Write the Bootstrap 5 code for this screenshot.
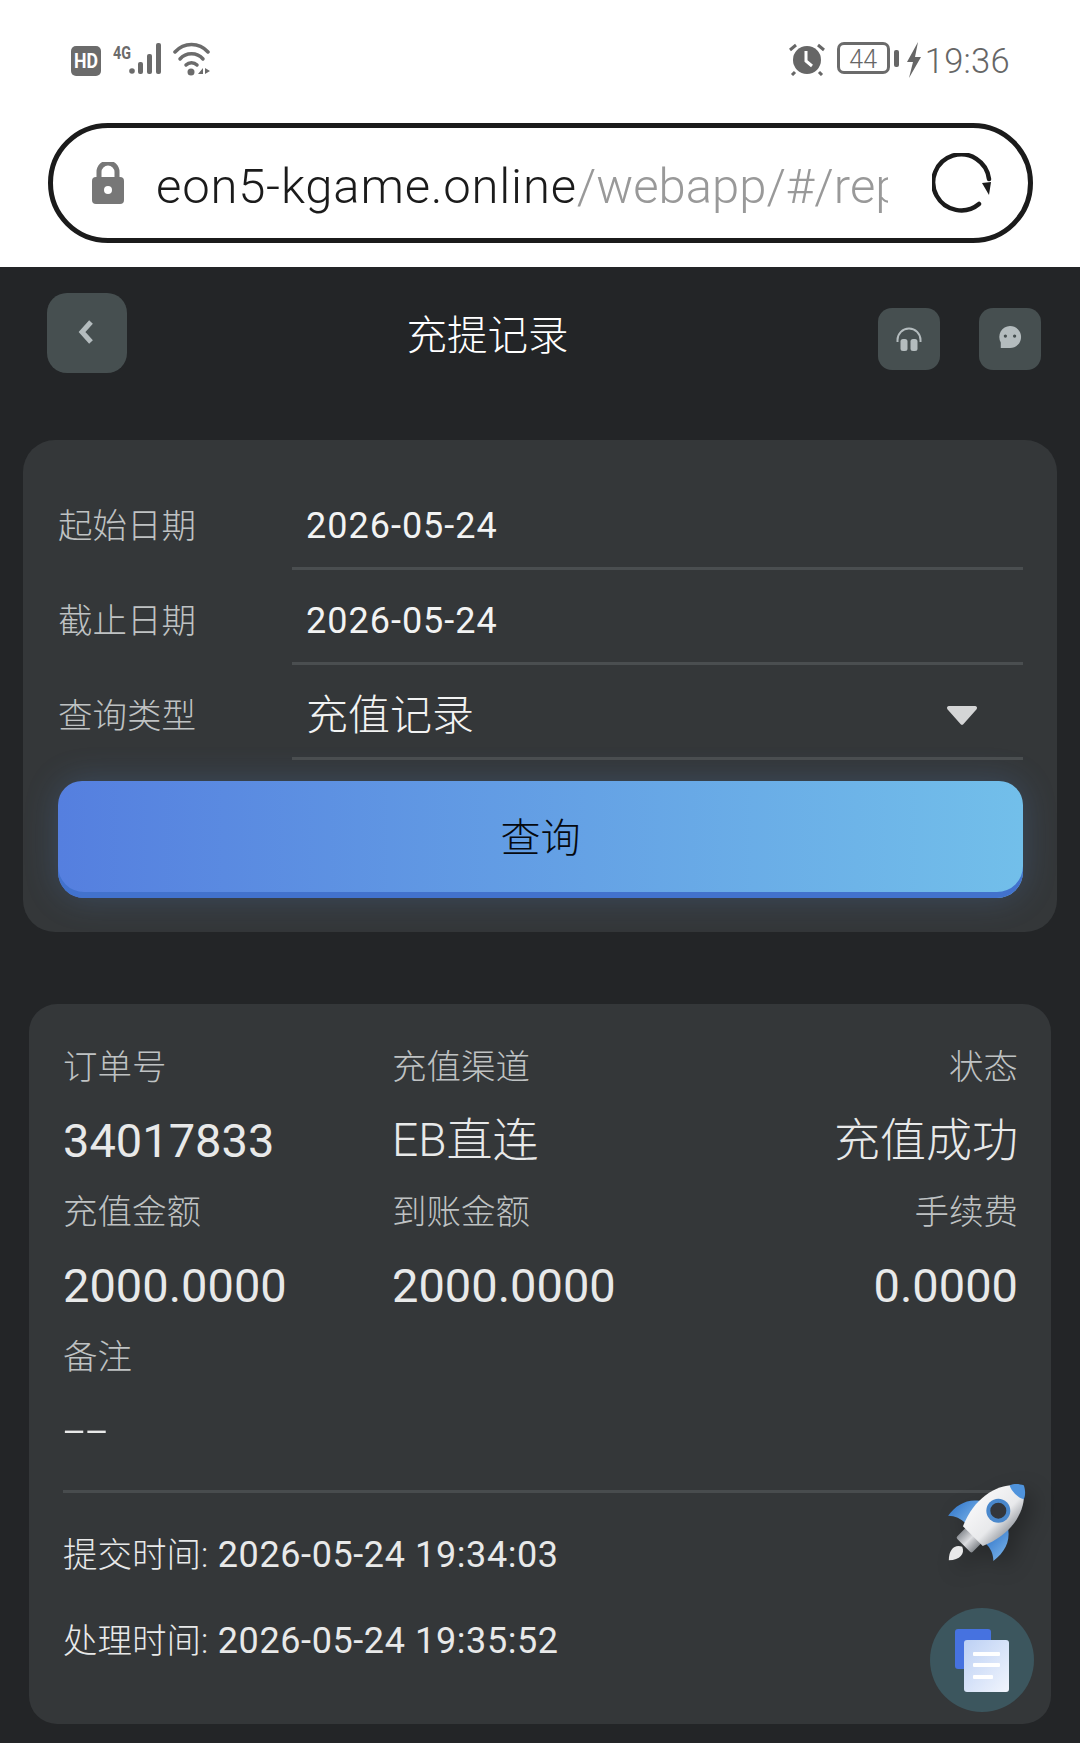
<!DOCTYPE html>
<html lang="zh-CN">

<head>
    <meta charset="UTF-8">
    <meta name="viewport" content="width=device-width, initial-scale=1.0">
    <title>充提记录</title>
    <link href="https://cdn.jsdelivr.net/npm/bootstrap@5.3.0/dist/css/bootstrap.min.css" rel="stylesheet">
    <style>
        html, body { height: 1743px; overflow: hidden; }
        body { background: #232527; font-family: Roboto, "Noto Sans CJK SC", sans-serif; }
        .phone-top { background: #fff; height: 267px; position: relative; }
        .status-row { height: 123px; padding: 42px 70px 0 71px; color: #666; }
        .status-time { font-size: 34.5px; font-weight: 300; line-height: 36px; margin: 1px 0 0 3px; letter-spacing: .3px; }
        .batt-box { width: 53px; height: 32px; border: 3px solid #6b6b6b; border-radius: 7px; font-size: 25px; line-height: 29px; font-weight: 300; text-align: center; }
        .url-pill { height: 120px; margin: 0 47px 0 48px; border: 5px solid #1b1b1b; border-radius: 60px; padding: 0 36px 0 39px; }
        .url-text { font-size: 49px; width: 732px; margin: 8px 0 0 32px; white-space: nowrap; overflow: hidden; color: #1b1b1b; font-weight: 300; letter-spacing: .8px; }
        .url-text span { color: #999; letter-spacing: 0; }
        .app-head { height: 173px; padding: 26px 39px 0 47px; }
        .back-box { width: 80px; height: 80px; border-radius: 20px; background: #464f50; }
        .head-title { color: #fff; font-size: 40.5px; line-height: 86px; margin-right: 30px; font-weight: 300; }
        .tool-box { width: 62px; height: 62px; margin-top: 15px; border-radius: 14px; background: #464f50; }
        .search-panel { margin: 0 23px; height: 492px; padding: 35px 34px 0 35px; background: #343739; border-radius: 32px; }
        .field-row { height: 95px; }
        .field-name { width: 234px; font-size: 34.5px; font-weight: 300; color: #bfc2c3; padding-top: 8px; }
        .field-box { height: 95px; padding: 10px 14px 0; border-bottom: 3px solid #4a4e50; color: #f2f3f3; font-size: 36px; letter-spacing: 1px; }
        .field-select { height: 94px; padding-top: 8px; font-size: 42px; font-weight: 300; letter-spacing: 0; padding-right: 45px; }
        .query-btn { display: block; width: 100%; height: 117px; margin-top: 21px; border: 0; border-radius: 24px 24px 26px 26px; font-size: 40px; color: #06090f; font-weight: 300; padding-bottom: 8px; background: linear-gradient(90deg, #557fdf, #72bfea); box-shadow: inset 0 -6px 0 #4272cd, 0 0 34px rgba(90, 150, 230, .22); }
        .query-btn:hover { color: #06090f; }
        .record-panel { margin: 72px 29px 0; height: 720px; padding: 31px 33px 0 34px; background: #343739; border-radius: 28px; }
        .record-grid { display: grid; grid-template-columns: 329px 1fr auto; }
        .rec-label { font-size: 34.5px; line-height: 64px; font-weight: 300; color: #bfc2c3; }
        .rec-value { height: 81px; font-size: 46px; line-height: 83px; color: #e8e9e9; font-weight: 300; }
        .rec-num { font-size: 47px; font-weight: 400; }
        .rec-dash { display: inline-block; transform: scaleX(1.7); transform-origin: left; }
        .rec-line { height: 3px; background: #484c4e; margin: 20px 0 19px; }
        .rec-time { font-size: 36px; line-height: 86px; color: #e8e9e9; letter-spacing: .6px; }
        .rec-time span { font-size: 34.5px; font-weight: 300; letter-spacing: 0; }
        .float-rocket { position: absolute; left: 927px; top: 1462px; filter: drop-shadow(8px 8px 10px rgba(0, 0, 0, .25)); }
        .float-doc { position: absolute; left: 930px; top: 1608px; width: 104px; height: 104px; border-radius: 50%; background: #3c565e; }
    </style>
</head>

<body>

    <div class="phone-top">
        <div class="status-row d-flex align-items-start">
            <svg width="30" height="30" viewBox="0 0 30 30" class="me-2 mt-1"><rect width="30" height="30" rx="5" fill="#6b6b6b"/><text x="15" y="22" font-size="20" font-weight="700" font-family="Roboto" fill="#fff" text-anchor="middle" textLength="24" lengthAdjust="spacingAndGlyphs">HD</text></svg>
            <svg width="56" height="32" viewBox="0 0 56 32" class="ms-1"><text x="0" y="17" font-size="19" font-weight="700" font-family="Roboto" fill="#6b6b6b" textLength="18" lengthAdjust="spacingAndGlyphs">4G</text><g fill="#6b6b6b"><circle cx="19" cy="29" r="2.800"/><rect x="25" y="20" width="5" height="12" rx="2"/><rect x="34" y="12" width="5" height="20" rx="2"/><rect x="43" y="1" width="5" height="31" rx="2"/></g></svg>
            <svg width="38" height="34" viewBox="0 0 38 34" class="ms-1"><g fill="none" stroke="#6b6b6b" stroke-width="3.500" stroke-linecap="round"><path d="M2 10C11 0 26 0 35 10"/><path d="M7 17C13 10 24 10 30 17"/><path d="M13 23C16 20 21 20 24 23"/></g><circle cx="18" cy="30" r="3.500" fill="#6b6b6b"/><path d="M25 32l5-6v6zM32 26l5 3-5 3z" fill="#6b6b6b"/></svg>
            <div class="flex-grow-1"></div>
            <svg width="36" height="34" viewBox="0 0 36 34"><circle cx="18" cy="18" r="14" fill="#666"/><path d="M17 9v10l6 5" fill="none" stroke="#fff" stroke-width="3"/><path d="M1 8l6-5M35 8l-6-5M6 30l-3 3M30 30l3 3" stroke="#666" stroke-width="3"/></svg>
            <div class="d-flex align-items-center" style="margin-left:12px">
                <div class="batt-box">44</div>
                <svg width="5" height="17" class="ms-1"><rect width="5" height="17" rx="2" fill="#666"/></svg>
            </div>
            <svg width="16" height="36" viewBox="0 0 16 36" style="margin-left:7px"><path d="M12 0L1 20h6L3 36l12-21H9z" fill="#666"/></svg>
            <span class="status-time">19:36</span>
        </div>
        <div class="url-pill d-flex align-items-center">
            <svg width="32" height="42" viewBox="0 0 32 42"><rect y="15" width="32" height="27" rx="4" fill="#777"/><path d="M7 17V10a9 9 0 0 1 18 0v7" fill="none" stroke="#777" stroke-width="5"/><circle cx="16" cy="28" r="4" fill="#fff"/></svg>
            <div class="url-text">eon5-kgame.online<span>/webapp/#/report</span></div>
            <svg width="60" height="60" viewBox="0 0 60 60" class="ms-auto"><path d="M47 51A28 28 0 1 1 57 26" fill="none" stroke="#1b1b1b" stroke-width="4.500" stroke-linecap="round"/><path d="M50 30l9-1-2 13z" fill="#1b1b1b"/></svg>
        </div>
    </div>

    <div class="app-head d-flex align-items-start">
        <div class="back-box d-flex align-items-center justify-content-center">
            <svg width="18" height="26" viewBox="0 0 18 26" style="margin:-2px 2px 0 0"><path d="M14 3L5 13l9 10" fill="none" stroke="#b4bcbe" stroke-width="5"/></svg>
        </div>
        <div class="head-title flex-grow-1 text-center">充提记录</div>
        <div class="tool-box d-flex align-items-center justify-content-center">
            <svg width="26" height="24" viewBox="0 0 26 24"><path d="M1.500 15V13a11.500 11.500 0 0 1 23 0v2" fill="none" stroke="#b4bcbe" stroke-width="2"/><rect x="4.500" y="12" width="7" height="12" rx="2.500" fill="#b4bcbe"/><rect x="14.500" y="12" width="7" height="12" rx="2.500" fill="#b4bcbe"/></svg>
        </div>
        <div class="tool-box d-flex align-items-center justify-content-center" style="margin-left:39px">
            <svg width="24" height="24" viewBox="0 0 26 26" style="margin-top:-5px"><path d="M13 1a12 12 0 1 1 0 24H3v-6A12 12 0 0 1 13 1z" fill="#b4bcbe"/><circle cx="8" cy="12" r="1.800" fill="#464f50"/><circle cx="18" cy="12" r="1.800" fill="#464f50"/></svg>
        </div>
    </div>

    <div class="search-panel">
        <div class="field-row d-flex align-items-center">
            <div class="field-name">起始日期</div>
            <div class="field-box flex-grow-1 d-flex align-items-center">2026-05-24</div>
        </div>
        <div class="field-row d-flex align-items-center">
            <div class="field-name">截止日期</div>
            <div class="field-box flex-grow-1 d-flex align-items-center">2026-05-24</div>
        </div>
        <div class="field-row d-flex align-items-center">
            <div class="field-name">查询类型</div>
            <div class="field-box field-select flex-grow-1 d-flex align-items-center justify-content-between">
                <span>充值记录</span>
                <svg width="32" height="22" viewBox="0 0 32 22"><path d="M3 2h26a2 2 0 0 1 1.600 3.200L17.500 20a2 2 0 0 1-3 0L1.400 5.200A2 2 0 0 1 3 2z" fill="#d4d5d6"/></svg>
            </div>
        </div>
        <button type="button" class="btn query-btn">查询</button>
    </div>

    <div class="record-panel">
        <div class="record-grid">
            <div><div class="rec-label">订单号</div><div class="rec-value rec-num">34017833</div></div>
            <div><div class="rec-label">充值渠道</div><div class="rec-value">EB直连</div></div>
            <div class="text-end"><div class="rec-label">状态</div><div class="rec-value">充值成功</div></div>
            <div><div class="rec-label">充值金额</div><div class="rec-value rec-num">2000.0000</div></div>
            <div><div class="rec-label">到账金额</div><div class="rec-value rec-num">2000.0000</div></div>
            <div class="text-end"><div class="rec-label">手续费</div><div class="rec-value rec-num">0.0000</div></div>
            <div><div class="rec-label">备注</div><div class="rec-value"><span class="rec-dash">--</span></div></div>
        </div>
        <div class="rec-line"></div>
        <div class="rec-time"><span>提交时间:</span> 2026-05-24 19:34:03</div>
        <div class="rec-time"><span>处理时间:</span> 2026-05-24 19:35:52</div>
    </div>

    <svg class="float-rocket" width="120" height="120" viewBox="0 0 120 120">
        <defs>
            <linearGradient id="rocketBody" x1="0" x2="1"><stop offset="0" stop-color="#f6f6f7"/><stop offset=".65" stop-color="#e8e9eb"/><stop offset="1" stop-color="#a4a8ae"/></linearGradient>
            <linearGradient id="rocketFin" x1="0" x2="1"><stop offset="0" stop-color="#3f82d0"/><stop offset="1" stop-color="#6ba6e2"/></linearGradient>
            <linearGradient id="rocketPipe" x1="0" x2="1"><stop offset="0" stop-color="#8d9196"/><stop offset=".5" stop-color="#dcdde0"/><stop offset="1" stop-color="#85898e"/></linearGradient>
        </defs>
        <g transform="rotate(45 60 60) translate(10 8)">
            <path d="M30 42C19 50 16 62 18 75C23 70 29 68 36 68z" fill="url(#rocketFin)"/>
            <path d="M70 42C81 50 84 62 82 75C77 70 71 68 64 68z" fill="url(#rocketFin)"/>
            <rect x="39" y="68" width="22" height="17" rx="2" fill="url(#rocketPipe)"/>
            <path d="M50 87C57 90 58 98 50 106C42 98 43 90 50 87z" fill="#e9e9ea"/>
            <path d="M50 1C68 12 78 40 64 72H36C22 40 32 12 50 1z" fill="url(#rocketBody)"/>
            <path d="M50 0C54 2 58 5 60 10C55 13 45 13 40 10C42 5 46 2 50 0z" fill="#4f93dc"/>
            <circle cx="50" cy="36" r="12" fill="#4a88cc"/>
            <circle cx="50" cy="36" r="8" fill="#33363b"/>
        </g>
    </svg>
    <div class="float-doc">
        <svg width="104" height="104" viewBox="0 0 104 104">
            <defs><linearGradient id="docFace" x1="0" y1="0" x2="1" y2="1"><stop offset="0" stop-color="#bcd0f4"/><stop offset="1" stop-color="#f1f5fd"/></linearGradient></defs>
            <rect x="25" y="21" width="36" height="40" rx="3" fill="#4672e0"/>
            <rect x="34" y="32" width="45" height="52" rx="3" fill="url(#docFace)"/>
            <rect x="43" y="44" width="27" height="4" rx="1" fill="#fff"/>
            <rect x="43" y="55" width="27" height="4" rx="1" fill="#fff"/>
            <rect x="43" y="67" width="20" height="4" rx="1" fill="#fff"/>
        </svg>
    </div>

</body>

</html>
